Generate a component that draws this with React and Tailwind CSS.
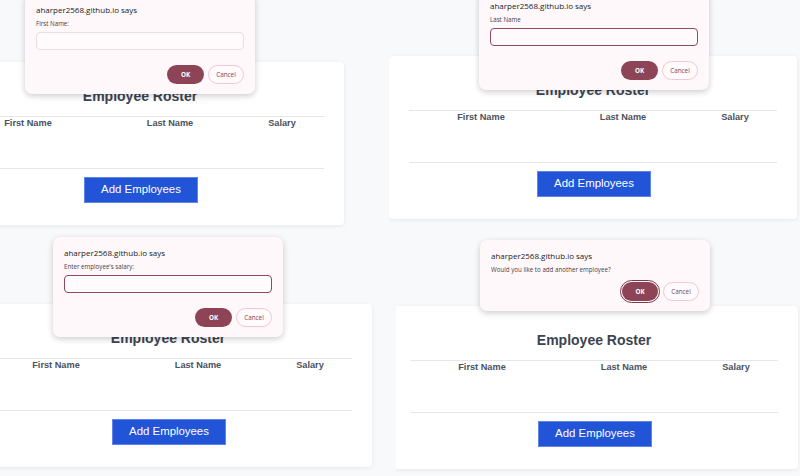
import React from 'react';

const Roster = ({ className }) => (
    <div className={`shrink-0 w-[408px] h-[163px] bg-white rounded-[4px] shadow-[0_1px_4px_rgba(0,0,0,0.08)] px-5 pt-[26px] font-['Liberation_Sans',Arial,sans-serif] ${className}`}>
        <h1 className="h-[16px] leading-[16px] text-center text-[14px] font-bold text-[#3d4451]">Employee Roster</h1>
        <div className="mt-[12px] border-t border-[#e5e7eb] h-[52px] pt-[1px] grid grid-cols-[144px_140px_84px] text-center text-[9.2px] leading-[10px] font-bold text-[#4a5260]">
            <span>First Name</span>
            <span>Last Name</span>
            <span>Salary</span>
        </div>
        <div className="border-t border-[#e5e7eb]"></div>
        <button className="block mx-auto mt-[8px] translate-x-[1px] w-[114px] h-[26px] bg-[#2254d8] border border-[#5f85e6] text-white text-[11.4px] leading-none">
            Add Employees
        </button>
    </div>
);

const Dialog = ({ className, label, input, focused, okFocus }) => (
    <div className={`absolute w-[230px] bg-[#fef8fb] rounded-[7px] shadow-[0_2px_6px_rgba(0,0,0,0.2)] px-[11px] pt-[10px] pb-[10px] font-['Open_Sans',sans-serif] ${className}`}>
        <div className="text-[8px] leading-[12px] font-medium text-[#1a1a1a]">aharper2568.github.io says</div>
        <div className="mt-[3px] text-[6.2px] leading-[9px] text-[#4a3b42]">{label}</div>
        {input && (
            <div className={`mt-[4px] h-[18px] rounded-[4px] bg-[#fffbfd] ${focused ? 'border-[1.5px] border-[#8f4a5c]' : 'border border-[#eadde2]'}`}></div>
        )}
        <div className={`flex justify-end gap-[4px] ${input ? 'mt-[15px]' : 'mt-[8px]'}`}>
            <button className={`h-[19px] rounded-full bg-[#8c4456] text-white text-[6.3px] font-bold ${okFocus ? 'w-[36px] mr-[1px] outline outline-[1.5px] outline-[#7c3a4b] outline-offset-[1px]' : 'w-[37px]'}`}>OK</button>
            <button className="w-[36px] h-[19px] rounded-full bg-[#fffafc] border border-[#f5c7d2] text-[#7a4557] text-[6.3px]">Cancel</button>
        </div>
    </div>
);

export default function App() {
    return (
        <div className="w-[800px] h-[476px] bg-[#f8f9fb] overflow-hidden flex flex-col">
            <div className="flex h-[230px] shrink-0">
                <div className="relative w-[389px] shrink-0 overflow-hidden flex items-start">
                    <Roster className="ml-[-64px] mt-[62px]" />
                    <Dialog className="left-[25px] top-[-6px]" label="First Name:" input />
                </div>
                <div className="relative flex-1 overflow-hidden flex items-start">
                    <Roster className="mt-[56px]" />
                    <Dialog className="left-[90px] top-[-10px]" label="Last Name" input focused />
                </div>
            </div>
            <div className="flex flex-1">
                <div className="relative w-[396px] shrink-0 overflow-hidden flex items-start">
                    <Roster className="ml-[-36px] mt-[74px]" />
                    <Dialog className="left-[53px] top-[7px]" label="Enter employee's salary:" input focused />
                </div>
                <div className="relative flex-1 overflow-hidden flex items-start">
                    <Roster className="ml-[-6px] mt-[76px]" />
                    <Dialog className="left-[84px] top-[10px]" label="Would you like to add another employee?" okFocus />
                </div>
            </div>
        </div>
    );
}
